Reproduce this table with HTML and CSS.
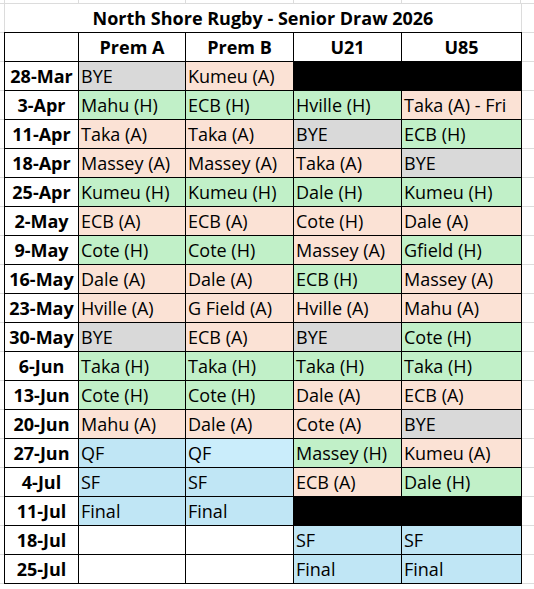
FILE: index.html
```html
<!DOCTYPE html>
<html lang="en">
<head>
<meta charset="utf-8">
<title>North Shore Rugby - Senior Draw 2026</title>
<link rel="stylesheet" href="styles.css">
</head>
<body>
<div class="toprow">
  <span class="tc c1"></span><span class="tc c2"></span><span class="tc c3"></span><span class="tc c4"></span><span class="tc c5"></span>
</div>
<div class="title">North Shore Rugby - Senior Draw 2026</div>
<div class="sheet">
  <div class="cell w"></div><div class="cell w hd">Prem A</div><div class="cell w hd">Prem B</div><div class="cell w hd">U21</div><div class="cell w hd">U85</div>

  <div class="cell w dt">28-Mar</div><div class="cell b">BYE</div><div class="cell a">Kumeu (A)</div><div class="cell x span2"></div>
  <div class="cell w dt">3-Apr</div><div class="cell g">Mahu (H)</div><div class="cell g">ECB (H)</div><div class="cell g">Hville (H)</div><div class="cell a">Taka (A) - Fri</div>
  <div class="cell w dt">11-Apr</div><div class="cell a">Taka (A)</div><div class="cell a">Taka (A)</div><div class="cell b">BYE</div><div class="cell g">ECB (H)</div>
  <div class="cell w dt">18-Apr</div><div class="cell a">Massey (A)</div><div class="cell a">Massey (A)</div><div class="cell a">Taka (A)</div><div class="cell b">BYE</div>
  <div class="cell w dt">25-Apr</div><div class="cell g">Kumeu (H)</div><div class="cell g">Kumeu (H)</div><div class="cell g">Dale (H)</div><div class="cell g">Kumeu (H)</div>
  <div class="cell w dt">2-May</div><div class="cell a">ECB (A)</div><div class="cell a">ECB (A)</div><div class="cell a">Cote (H)</div><div class="cell a">Dale (A)</div>
  <div class="cell w dt">9-May</div><div class="cell g">Cote (H)</div><div class="cell g">Cote (H)</div><div class="cell a">Massey (A)</div><div class="cell g">Gfield (H)</div>
  <div class="cell w dt">16-May</div><div class="cell a">Dale (A)</div><div class="cell a">Dale (A)</div><div class="cell g">ECB (H)</div><div class="cell a">Massey (A)</div>
  <div class="cell w dt">23-May</div><div class="cell a">Hville (A)</div><div class="cell a">G Field (A)</div><div class="cell a">Hville (A)</div><div class="cell a">Mahu (A)</div>
  <div class="cell w dt">30-May</div><div class="cell b">BYE</div><div class="cell a">ECB (A)</div><div class="cell b">BYE</div><div class="cell g">Cote (H)</div>
  <div class="cell w dt">6-Jun</div><div class="cell g">Taka (H)</div><div class="cell g">Taka (H)</div><div class="cell g">Taka (H)</div><div class="cell g">Taka (H)</div>
  <div class="cell w dt">13-Jun</div><div class="cell g">Cote (H)</div><div class="cell g">Cote (H)</div><div class="cell a">Dale (A)</div><div class="cell a">ECB (A)</div>
  <div class="cell w dt">20-Jun</div><div class="cell a">Mahu (A)</div><div class="cell a">Dale (A)</div><div class="cell a">Cote (A)</div><div class="cell b">BYE</div>
  <div class="cell w dt">27-Jun</div><div class="cell q">QF</div><div class="cell q2">QF</div><div class="cell g">Massey (H)</div><div class="cell a">Kumeu (A)</div>
  <div class="cell w dt">4-Jul</div><div class="cell q">SF</div><div class="cell q">SF</div><div class="cell a">ECB (A)</div><div class="cell g">Dale (H)</div>
  <div class="cell w dt">11-Jul</div><div class="cell q">Final</div><div class="cell q">Final</div><div class="cell x span2"></div>
  <div class="cell w dt">18-Jul</div><div class="cell w"></div><div class="cell w"></div><div class="cell q">SF</div><div class="cell q">SF</div>
  <div class="cell w dt">25-Jul</div><div class="cell w"></div><div class="cell w"></div><div class="cell q">Final</div><div class="cell q">Final</div>
</div>
</body>
</html>
```
FILE: styles.css
```css
html, body {
  margin: 0;
  padding: 0;
}
body {
  width: 534px;
  height: 589px;
  overflow: hidden;
  background-color: #ffffff;
  background-image: repeating-linear-gradient(to bottom, #dcdcdc 0, #dcdcdc 1px, transparent 1px, transparent 29px);
  background-position: 0 3px;
  font-family: "Open Sans", "Liberation Sans", sans-serif;
  font-size: 18px;
  color: #000;
}
.toprow {
  height: 3px;
  margin-left: 4px;
  width: 518px;
  display: grid;
  grid-template-columns: 74px 107px 108px 108px 120px 1px;
}
.tc {
  border-left: 1px solid #dcdcdc;
}
.c5 {
  border-right: 1px solid #dcdcdc;
}
.title {
  box-sizing: border-box;
  margin-left: 4px;
  width: 518px;
  height: 29px;
  border-left: 1px solid #dcdcdc;
  border-right: 1px solid #dcdcdc;
  padding-top: 5px;
  line-height: 20px;
  text-align: center;
  font-weight: 700;
}
.sheet {
  margin-left: 4px;
  width: 516px;
  display: grid;
  grid-template-columns: 73px 106px 107px 107px 119px;
  grid-auto-rows: 28px;
  gap: 1px;
  background: #000;
  border: 1px solid #000;
}
.cell {
  padding: 4px 0 0 2px;
  line-height: 20px;
  white-space: nowrap;
  overflow: hidden;
}
.hd, .dt {
  font-weight: 700;
  text-align: center;
  padding-left: 0;
}
.span2 { grid-column: span 2; }
.w { background: #ffffff; }
.g { background: #c1f0c8; }
.a { background: #fbe2d5; }
.b { background: #d9d9d9; }
.q { background: #c0e6f5; }
.q2 { background: #caedfb; }
.x { background: #000000; }
```
